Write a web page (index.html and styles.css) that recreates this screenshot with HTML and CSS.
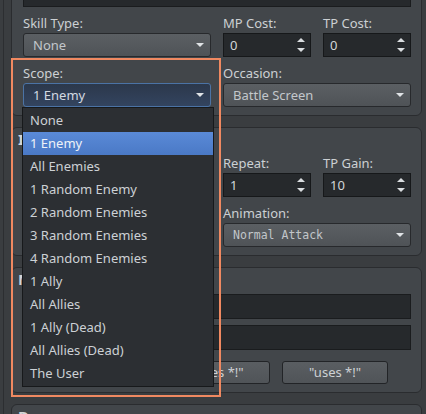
FILE: index.html
```html
<!DOCTYPE html>
<html>
<head>
<meta charset="utf-8">
<link rel="stylesheet" href="styles.css">
</head>
<body>
<div class="page">
  <section class="panel p1">
    <div class="grid">
      <div class="field span3"><div class="text top"></div></div>
      <div class="field">
        <span class="lbl">Skill Type:</span>
        <div class="select">None<svg class="caret" width="8" height="4" viewBox="0 0 8 4"><path d="M0 0H8L4 4Z"/></svg></div>
      </div>
      <div class="field">
        <span class="lbl">MP Cost:</span>
        <div class="spin">0<svg class="arr" width="8" height="15" viewBox="0 0 8 15"><path d="M4 0L8 4H0Z M0 10H8L4 14Z"/></svg></div>
      </div>
      <div class="field">
        <span class="lbl">TP Cost:</span>
        <div class="spin">0<svg class="arr" width="8" height="15" viewBox="0 0 8 15"><path d="M4 0L8 4H0Z M0 10H8L4 14Z"/></svg></div>
      </div>
      <div class="field">
        <span class="lbl">Scope:</span>
        <div class="select focus">1 Enemy<svg class="caret" width="8" height="4" viewBox="0 0 8 4"><path d="M0 0H8L4 4Z"/></svg></div>
      </div>
      <div class="field span2">
        <span class="lbl">Occasion:</span>
        <div class="select">Battle Screen<svg class="caret" width="8" height="4" viewBox="0 0 8 4"><path d="M0 0H8L4 4Z"/></svg></div>
      </div>
    </div>
  </section>

  <section class="panel p2">
    <div class="title">Invocation</div>
    <div class="grid grid4">
      <div class="field">
        <span class="lbl">Speed:</span>
        <div class="spin">0<svg class="arr" width="8" height="15" viewBox="0 0 8 15"><path d="M4 0L8 4H0Z M0 10H8L4 14Z"/></svg></div>
      </div>
      <div class="field">
        <span class="lbl">Success:</span>
        <div class="spin">100<svg class="arr" width="8" height="15" viewBox="0 0 8 15"><path d="M4 0L8 4H0Z M0 10H8L4 14Z"/></svg></div>
      </div>
      <div class="field">
        <span class="lbl">Repeat:</span>
        <div class="spin">1<svg class="arr" width="8" height="15" viewBox="0 0 8 15"><path d="M4 0L8 4H0Z M0 10H8L4 14Z"/></svg></div>
      </div>
      <div class="field">
        <span class="lbl">TP Gain:</span>
        <div class="spin">10<svg class="arr" width="8" height="15" viewBox="0 0 8 15"><path d="M4 0L8 4H0Z M0 10H8L4 14Z"/></svg></div>
      </div>
      <div class="field span2">
        <span class="lbl">Hit Type:</span>
        <div class="select">Physical Attack<svg class="caret" width="8" height="4" viewBox="0 0 8 4"><path d="M0 0H8L4 4Z"/></svg></div>
      </div>
      <div class="field span2">
        <span class="lbl">Animation:</span>
        <div class="select mono">Normal Attack<svg class="caret" width="8" height="4" viewBox="0 0 8 4"><path d="M0 0H8L4 4Z"/></svg></div>
      </div>
    </div>
  </section>

  <section class="panel p3">
    <div class="title t-gap">Message</div>
    <div class="text msg"></div>
    <div class="text msg second"></div>
    <div class="btns">
      <div class="btn">"casts *!"</div>
      <div class="btn">"does *!"</div>
      <div class="btn">"uses *!"</div>
    </div>
  </section>

  <section class="panel p4">
    <div class="title">Damage</div>
    <div class="filler"></div>
  </section>
</div>

<div class="mark"></div>

<ul class="popup">
  <li>None</li>
  <li class="hl">1 Enemy</li>
  <li>All Enemies</li>
  <li>1 Random Enemy</li>
  <li>2 Random Enemies</li>
  <li>3 Random Enemies</li>
  <li>4 Random Enemies</li>
  <li>1 Ally</li>
  <li>All Allies</li>
  <li>1 Ally (Dead)</li>
  <li>All Allies (Dead)</li>
  <li>The User</li>
</ul>
</body>
</html>
```

FILE: styles.css
```css
* { box-sizing: border-box; }
html, body { margin: 0; padding: 0; }
body {
  width: 426px;
  height: 414px;
  overflow: hidden;
  position: relative;
  display: flow-root;
  background: #3a3d40;
  font-family: "Noto Sans", "Open Sans", sans-serif;
  font-size: 13px;
  color: #c6cacd;
}
.page {
  margin: -26px 0 0 3px;
  border-left: 1px solid #2c2e31;
  padding: 0 4px 0 7px;
}
.panel {
  background: #42464a;
  border: 1px solid #2a2c2f;
  border-radius: 6px;
  padding: 8px 10px 8px 11px;
}
.panel + .panel { margin-top: 11px; }
.p2, .p3, .p4 { padding-top: 0; }
.title {
  font-weight: 700;
  font-size: 15px;
  line-height: 15px;
  height: 19px;
  padding-top: 4px;
  margin-left: -5px;
  color: #d2d5d8;
  white-space: nowrap;
}
.t-gap { margin-bottom: 7px; }
.grid {
  display: grid;
  grid-template-columns: 188px 88px 88px;
  column-gap: 12px;
}
.grid4 { grid-template-columns: 88px 88px 88px 88px; }
.span2 { grid-column: span 2; }
.span3 { grid-column: 1 / -1; }
.field { display: flex; flex-direction: column; }
.lbl {
  display: block;
  height: 26px;
  padding-top: 7px;
  line-height: 18px;
  white-space: nowrap;
  color: #ccd0d3;
}
.text {
  height: 24px;
  background: #26292c;
  border: 1px solid #1a1c1e;
}
.msg { height: 25px; }
.second { margin-top: 6px; }
.spin {
  position: relative;
  height: 24px;
  background: #26292c;
  border: 1px solid #16181a;
  padding-left: 6px;
  line-height: 22px;
  color: #d2d6d9;
}
.arr { position: absolute; right: 5px; top: 4px; fill: #dadde0; }
.select {
  position: relative;
  height: 24px;
  border: 1px solid #27292c;
  border-radius: 3px;
  background: linear-gradient(#5b5f63, #4f5357);
  padding-left: 9px;
  line-height: 22px;
  color: #c3c7cb;
  white-space: nowrap;
}
.select.focus {
  border-color: #4b73a5;
  background: linear-gradient(#2c384b, #33445f);
  color: #d3d9e1;
}
.select.mono {
  font-family: "DejaVu Sans Mono", monospace;
  font-size: 11.5px;
  color: #c2c6ca;
}
.caret { position: absolute; right: 6px; top: 9px; fill: #e0e3e6; }
.btns {
  display: flex;
  justify-content: center;
  gap: 12px;
  margin-top: 11px;
}
.btn {
  width: 106px;
  height: 23px;
  border: 1px solid #222427;
  border-radius: 3px;
  background: linear-gradient(#5a5e62, #505458);
  color: #cdd1d4;
  text-align: center;
  line-height: 21px;
  white-space: nowrap;
}
.filler { height: 60px; }
.mark {
  position: absolute;
  left: 11px;
  top: 58px;
  width: 210px;
  height: 339px;
  border: 2px solid #f08961;
}
.popup {
  position: absolute;
  left: 22px;
  top: 107px;
  width: 192px;
  height: 280px;
  margin: 0;
  padding: 1px 0;
  list-style: none;
  background: #2c2f33;
  border: 1px solid #17191b;
}
.popup li {
  height: 23px;
  line-height: 23px;
  padding-left: 7px;
  color: #cdd1d5;
  white-space: nowrap;
}
.popup li.hl {
  background: linear-gradient(#5a8ad7, #4a79c6);
  color: #eef2f8;
}
```
